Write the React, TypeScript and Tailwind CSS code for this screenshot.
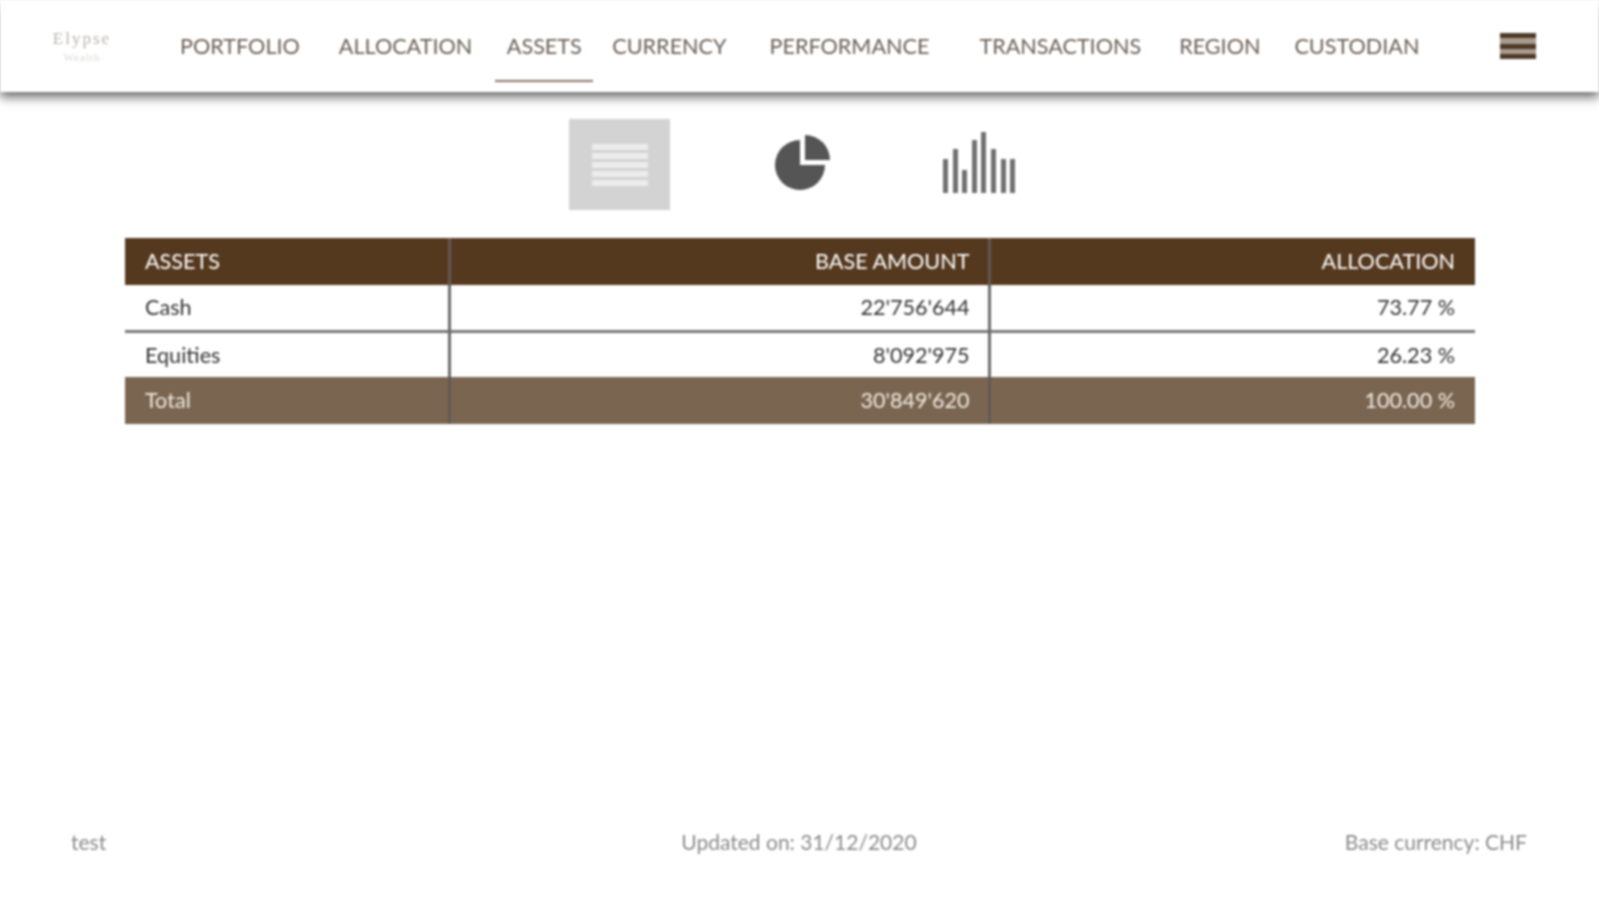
import React from 'react';

const navItems = [
  { label: 'PORTFOLIO', cls: 'ml-[66px]' },
  { label: 'ALLOCATION', cls: 'ml-[39px]' },
  { label: 'CURRENCY', cls: 'ml-[19px]' },
  { label: 'PERFORMANCE', cls: 'ml-[43px]' },
  { label: 'TRANSACTIONS', cls: 'ml-[50px]' },
  { label: 'REGION', cls: 'ml-[38px]' },
  { label: 'CUSTODIAN', cls: 'ml-[34px]' },
];

const rows = [
  { name: 'Cash', amount: "22'756'644", pct: '73.77 %' },
  { name: 'Equities', amount: "8'092'975", pct: '26.23 %' },
];

const NavLink: React.FC<{ label: string; className: string }> = ({ label, className }) => (
  <a className={`whitespace-nowrap text-[#6b5f54] ${className}`}>{label}</a>
);

const PieIcon = () => (
  <svg width="60" height="60" viewBox="0 0 60 60" className="fill-[#555555]">
    <path d="M26 8 A25 25 0 1 0 51 33 L26 33 Z" />
    <path d="M31 3 A25 25 0 0 1 56 28 L31 28 Z" />
  </svg>
);

const BarsIcon = () => {
  const bars = [34, 44, 23, 53, 61, 44, 34, 34];
  return (
    <div className="flex h-[64px] items-end gap-[4.6px]">
      {bars.map((h, i) => (
        <div key={i} className="w-[5px] bg-[#707070]" style={{ height: h }} />
      ))}
    </div>
  );
};

export default function App() {
  return (
    <div className="relative flex h-[900px] flex-col bg-white text-[21.6px] blur-[1px] font-['Lato','Liberation_Sans',sans-serif]">
      {/* Header */}
      <header className="flex h-[92px] items-center bg-white shadow-[0_5px_10px_rgba(0,0,0,0.6)]">
        <div className="ml-[50px] flex w-[64px] flex-col items-center font-['Liberation_Serif',serif] leading-none">
          <span className="text-[17px] tracking-[2px] text-[#b9b4ae]">Elypse</span>
          <span className="mt-[5px] text-[11px] tracking-[1px] text-[#dcd8d2]">Wealth</span>
        </div>
        <NavLink label={navItems[0].label} className={navItems[0].cls} />
        <NavLink label={navItems[1].label} className={navItems[1].cls} />
        <div className="relative ml-[23px] flex h-[92px] w-[98px] items-center justify-center text-[#6b5f54]">
          ASSETS
          <span className="absolute bottom-[10px] left-0 h-[2px] w-full bg-[#8a7566]" />
        </div>
        {navItems.slice(2).map((item) => (
          <NavLink key={item.label} label={item.label} className={item.cls} />
        ))}
        <div className="ml-[81px] flex h-[26px] w-[36px] flex-col justify-between bg-[#a99c8f]">
          <div className="h-[5px] bg-[#4f3a28]" />
          <div className="h-[5px] bg-[#4f3a28]" />
          <div className="h-[5px] bg-[#4f3a28]" />
        </div>
      </header>

      {/* View switch */}
      <div className="mt-[27px] flex h-[91px] items-center pl-[569px]">
        <div className="flex h-[91px] w-[101px] flex-col items-center justify-center gap-[3px] bg-[#d3d3d3]">
          {[0, 1, 2, 3, 4].map((i) => (
            <div key={i} className="h-[6px] w-[56px] bg-[#ececec]" />
          ))}
        </div>
        <div className="ml-[104px] mb-[6px]">
          <PieIcon />
        </div>
        <div className="ml-[109px] mb-[7px]">
          <BarsIcon />
        </div>
      </div>

      {/* Table */}
      <div className="mt-[28px] pl-[125px] pr-[124px]">
        <table className="w-full table-fixed border-collapse">
          <colgroup>
            <col className="w-[324px]" />
            <col className="w-[540px]" />
            <col />
          </colgroup>
          <thead>
            <tr className="h-[47px] bg-[#55391f] text-white">
              <th className="border-r-[3px] border-[#5f5a55] px-5 text-left font-normal">ASSETS</th>
              <th className="border-r-[3px] border-[#5f5a55] pl-5 pr-[18px] text-right font-normal">BASE AMOUNT</th>
              <th className="px-5 text-right font-normal">ALLOCATION</th>
            </tr>
          </thead>
          <tbody>
            {rows.map((r, i) => (
              <tr key={r.name} className={`h-[46px] text-[#333333] ${i === 0 ? 'border-b-[3px] border-[#77787a]' : ''}`}>
                <td className="border-r-[3px] border-[#6b6b6b] px-5">{r.name}</td>
                <td className="border-r-[3px] border-[#6b6b6b] pl-5 pr-[18px] text-right">{r.amount}</td>
                <td className="px-5 text-right">{r.pct}</td>
              </tr>
            ))}
            <tr className="h-[47px] bg-[#7a6650] text-[#eeeae4]">
              <td className="border-r-[3px] border-[#5f5a55] px-5">Total</td>
              <td className="border-r-[3px] border-[#5f5a55] pl-5 pr-[18px] text-right">30'849'620</td>
              <td className="px-5 text-right">100.00 %</td>
            </tr>
          </tbody>
        </table>
      </div>

      {/* Footer */}
      <footer className="mt-[402px] flex items-center justify-between pl-[71px] pr-[72px] text-[21px] text-[#8b8b8b]">
        <span className="w-[300px]">test</span>
        <span>Updated on: 31/12/2020</span>
        <span className="w-[300px] text-right">Base currency: CHF</span>
      </footer>
    </div>
  );
}
